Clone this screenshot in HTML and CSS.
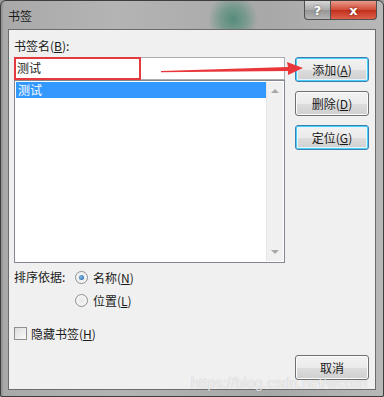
FILE: index.html
```html
<!DOCTYPE html>
<html lang="zh-CN">
<head>
    <meta charset="UTF-8">
    <title>书签</title>
    <link rel="stylesheet" href="styles.css">
</head>
<body>
    <div class="window">
        <!-- Title bar -->
        <div class="titlebar">
            <span class="title">书签</span>
            <div class="caption-buttons">
                <div class="cap-btn help">?</div>
                <div class="cap-btn close">x</div>
            </div>
        </div>

        <!-- Dialog body -->
        <div class="client">
            <div class="label">书签名(<u>B</u>):</div>
            <div class="main-row">
                <div class="left-col">
                    <div class="name-input">
                        <span>测试</span>
                        <div class="mark-box"></div>
                    </div>
                    <div class="listbox">
                        <div class="list-items">
                            <div class="item selected">测试</div>
                        </div>
                        <div class="scrollbar">
                            <span class="arrow up"></span>
                            <span class="arrow down"></span>
                        </div>
                    </div>
                </div>
                <div class="right-col">
                    <div class="btn focus">添加(<u>A</u>)</div>
                    <div class="btn">删除(<u>D</u>)</div>
                    <div class="btn focus">定位(<u>G</u>)</div>
                </div>
            </div>

            <div class="sort-row">
                <span class="sort-label">排序依据:</span>
                <div class="radios">
                    <div class="radio-row"><span class="radio checked"></span>名称(<u>N</u>)</div>
                    <div class="radio-row"><span class="radio"></span>位置(<u>L</u>)</div>
                </div>
            </div>

            <div class="check-row"><span class="checkbox"></span>隐藏书签(<u>H</u>)</div>

            <div class="footer">
                <div class="btn">取消</div>
            </div>
        </div>

        <!-- annotation arrow -->
        <svg class="arrow-mark" width="384" height="397" viewBox="0 0 384 397">
            <path d="M160 70 L287 66 L286 61 L302 67 L287 74 L287 70 L160 71.2 Z" fill="#e8363a"/>
        </svg>
        <div class="watermark">https://blog.csdn.net/weixin</div>
    </div>
</body>
</html>
```

FILE: styles.css
```css
* {
    margin: 0;
    padding: 0;
    box-sizing: border-box;
}

body {
    font-family: "Noto Sans CJK SC", "Liberation Sans", sans-serif;
    font-size: 12px;
    color: #1a1a1a;
    background: #9a9a9a;
}

u {
    text-decoration: underline;
    text-underline-offset: 1px;
}

.window {
    position: relative;
    width: 384px;
    height: 397px;
    background:
        radial-gradient(circle at 232px 18px, rgba(70, 135, 115, 0.85) 0, rgba(80, 140, 120, 0.55) 13px, rgba(160, 170, 165, 0) 25px),
        linear-gradient(to right, #8d8d8d 0, #a9a9a9 3px, #b4b4b4 30%, #a8a8a8 70%, #b8b8b8 100%);
    border: 1px solid #3e3e3e;
    border-radius: 6px 6px 2px 2px;
    overflow: hidden;
    display: flex;
    flex-direction: column;
}

.titlebar {
    height: 28px;
    display: flex;
    align-items: flex-start;
    justify-content: space-between;
    padding-left: 7px;
}

.title {
    margin-top: 6px;
    font-size: 12px;
    color: #1a1a1a;
}

.caption-buttons {
    display: flex;
    margin-right: 6px;
}

.cap-btn {
    height: 19px;
    display: flex;
    align-items: center;
    justify-content: center;
    font-family: "DejaVu Sans", sans-serif;
    font-weight: bold;
    color: #fff;
    border: 1px solid #505050;
    border-top: none;
}

.help {
    width: 27px;
    font-size: 13px;
    background: linear-gradient(#d6d6d6, #a9a9a9 50%, #959595 51%, #b5b5b5);
    border-radius: 0 0 0 4px;
    text-shadow: 0 0 2px #555;
}

.close {
    width: 46px;
    font-size: 13px;
    background: linear-gradient(#e89a8a, #d24a36 50%, #c0301c 51%, #e0604a);
    border-left: none;
    border-radius: 0 0 4px 0;
    text-shadow: 0 0 3px #6a1a10;
}

.client {
    margin: 0 7px 0 7px;
    height: 361px;
    background: #f0f0f0;
    border: 1px solid #6c6c6c;
    padding: 8px 6px 0 5px;
    display: flex;
    flex-direction: column;
}

.label {
    height: 16px;
    line-height: 16px;
}

.main-row {
    display: flex;
    justify-content: space-between;
    margin-top: 3px;
}

.left-col {
    width: 271px;
}

.name-input {
    position: relative;
    height: 23px;
    background: #fff;
    border: 1px solid #abadb3;
    padding-left: 2px;
    line-height: 20px;
    font-size: 12px;
}

.mark-box {
    position: absolute;
    left: -1px;
    top: -1px;
    width: 127px;
    height: 23px;
    border: 2px solid #e23a3e;
}

.listbox {
    height: 183px;
    background: #fff;
    border: 1px solid #828790;
    display: flex;
    padding: 1px;
}

.list-items {
    flex: 1;
}

.item {
    height: 16px;
    line-height: 16px;
    padding-left: 2px;
}

.selected {
    background: #3399ff;
    color: #fff;
}

.scrollbar {
    width: 17px;
    background: #f0f0f0;
    border-left: 1px solid #e6e6e6;
    position: relative;
}

.arrow {
    position: absolute;
    left: 4px;
    width: 0;
    height: 0;
    border-left: 4px solid transparent;
    border-right: 4px solid transparent;
}

.arrow.up {
    top: 7px;
    border-bottom: 4px solid #a8a8a8;
}

.arrow.down {
    bottom: 7px;
    border-top: 4px solid #a8a8a8;
}

.right-col {
    width: 74px;
    display: flex;
    flex-direction: column;
    gap: 9px;
}

.btn {
    width: 74px;
    height: 25px;
    display: flex;
    align-items: center;
    justify-content: center;
    border: 1px solid #707070;
    border-radius: 3px;
    background: linear-gradient(#f2f2f2, #ebebeb 50%, #dddddd 51%, #cfcfcf);
    box-shadow: inset 0 0 0 1px #fcfcfc;
    font-size: 12px;
}

.btn.focus {
    border-color: #3c7fb1;
    box-shadow: inset 0 0 0 1px #48d0f8, inset 0 0 0 2px #e6f5fc;
}

.sort-row {
    display: flex;
    margin-top: 6px;
}

.sort-label {
    height: 16px;
    line-height: 16px;
    width: 61px;
}

.radios {
    display: flex;
    flex-direction: column;
    gap: 7px;
}

.radio-row {
    display: flex;
    align-items: center;
    height: 16px;
}

.radio {
    width: 13px;
    height: 13px;
    border-radius: 50%;
    border: 1px solid #8e8f8f;
    background: radial-gradient(circle, #e8e8e8 0, #fbfbfb 100%);
    margin-right: 5px;
    display: flex;
    align-items: center;
    justify-content: center;
}

.radio.checked::after {
    content: "";
    width: 5px;
    height: 5px;
    border-radius: 50%;
    background: radial-gradient(circle at 40% 40%, #7fbbe8, #1b5c9a);
}

.check-row {
    display: flex;
    align-items: center;
    height: 16px;
    margin-top: 17px;
}

.checkbox {
    width: 13px;
    height: 13px;
    border: 1px solid #8e8f8f;
    background: linear-gradient(135deg, #dcdcdc, #fbfbfb);
    margin-right: 4px;
}

.footer {
    display: flex;
    justify-content: flex-end;
    margin-top: 14px;
}

.arrow-mark {
    position: absolute;
    left: 0;
    top: 0;
    pointer-events: none;
}

.watermark {
    position: absolute;
    left: 190px;
    top: 374px;
    font-family: "Liberation Sans", sans-serif;
    font-size: 14px;
    color: rgba(255, 255, 255, 0.75);
    text-shadow: 0 0 1px rgba(120, 120, 120, 0.5);
    letter-spacing: 0.3px;
}
```
